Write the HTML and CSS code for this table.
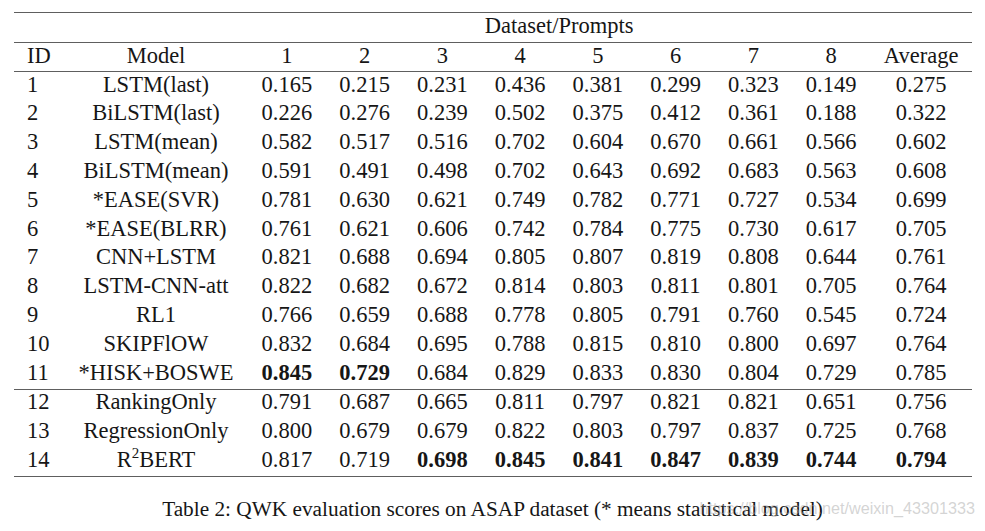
FILE: index.html
```html
<!DOCTYPE html>
<html>
<head>
<meta charset="utf-8">
<link rel="stylesheet" href="styles.css">
</head>
<body>
<div class="page">
  <table class="qwk">
    <colgroup>
      <col class="c-id"><col class="c-model">
      <col class="c-num"><col class="c-num"><col class="c-num"><col class="c-num">
      <col class="c-num"><col class="c-num"><col class="c-num"><col class="c-num">
      <col class="c-avg">
    </colgroup>
    <thead>
      <tr class="h1"><td></td><td></td><td colspan="8" class="ctr">Dataset/Prompts</td><td></td></tr>
      <tr class="h2 rule"><td class="id">ID</td><td>Model</td><td>1</td><td>2</td><td>3</td><td>4</td><td>5</td><td>6</td><td>7</td><td>8</td><td>Average</td></tr>
    </thead>
    <tbody>
      <tr class="rule first"><td class="id">1</td><td>LSTM(last)</td><td>0.165</td><td>0.215</td><td>0.231</td><td>0.436</td><td>0.381</td><td>0.299</td><td>0.323</td><td>0.149</td><td>0.275</td></tr>
      <tr class="r"><td class="id">2</td><td>BiLSTM(last)</td><td>0.226</td><td>0.276</td><td>0.239</td><td>0.502</td><td>0.375</td><td>0.412</td><td>0.361</td><td>0.188</td><td>0.322</td></tr>
      <tr class="r"><td class="id">3</td><td>LSTM(mean)</td><td>0.582</td><td>0.517</td><td>0.516</td><td>0.702</td><td>0.604</td><td>0.670</td><td>0.661</td><td>0.566</td><td>0.602</td></tr>
      <tr class="r"><td class="id">4</td><td>BiLSTM(mean)</td><td>0.591</td><td>0.491</td><td>0.498</td><td>0.702</td><td>0.643</td><td>0.692</td><td>0.683</td><td>0.563</td><td>0.608</td></tr>
      <tr class="r"><td class="id">5</td><td>*EASE(SVR)</td><td>0.781</td><td>0.630</td><td>0.621</td><td>0.749</td><td>0.782</td><td>0.771</td><td>0.727</td><td>0.534</td><td>0.699</td></tr>
      <tr class="r"><td class="id">6</td><td>*EASE(BLRR)</td><td>0.761</td><td>0.621</td><td>0.606</td><td>0.742</td><td>0.784</td><td>0.775</td><td>0.730</td><td>0.617</td><td>0.705</td></tr>
      <tr class="r"><td class="id">7</td><td>CNN+LSTM</td><td>0.821</td><td>0.688</td><td>0.694</td><td>0.805</td><td>0.807</td><td>0.819</td><td>0.808</td><td>0.644</td><td>0.761</td></tr>
      <tr class="r"><td class="id">8</td><td>LSTM-CNN-att</td><td>0.822</td><td>0.682</td><td>0.672</td><td>0.814</td><td>0.803</td><td>0.811</td><td>0.801</td><td>0.705</td><td>0.764</td></tr>
      <tr class="r"><td class="id">9</td><td>RL1</td><td>0.766</td><td>0.659</td><td>0.688</td><td>0.778</td><td>0.805</td><td>0.791</td><td>0.760</td><td>0.545</td><td>0.724</td></tr>
      <tr class="r"><td class="id">10</td><td>SKIPFlOW</td><td>0.832</td><td>0.684</td><td>0.695</td><td>0.788</td><td>0.815</td><td>0.810</td><td>0.800</td><td>0.697</td><td>0.764</td></tr>
      <tr class="r"><td class="id">11</td><td>*HISK+BOSWE</td><td class="b">0.845</td><td class="b">0.729</td><td>0.684</td><td>0.829</td><td>0.833</td><td>0.830</td><td>0.804</td><td>0.729</td><td>0.785</td></tr>
      <tr class="rule first"><td class="id">12</td><td>RankingOnly</td><td>0.791</td><td>0.687</td><td>0.665</td><td>0.811</td><td>0.797</td><td>0.821</td><td>0.821</td><td>0.651</td><td>0.756</td></tr>
      <tr class="r2"><td class="id">13</td><td>RegressionOnly</td><td>0.800</td><td>0.679</td><td>0.679</td><td>0.822</td><td>0.803</td><td>0.797</td><td>0.837</td><td>0.725</td><td>0.768</td></tr>
      <tr class="r2"><td class="id">14</td><td>R<sup class="sup">2</sup>BERT</td><td>0.817</td><td>0.719</td><td class="b">0.698</td><td class="b">0.845</td><td class="b">0.841</td><td class="b">0.847</td><td class="b">0.839</td><td class="b">0.744</td><td class="b">0.794</td></tr>
    </tbody>
  </table>
  <div class="caption">Table 2: QWK evaluation scores on ASAP dataset (* means statistical model)</div>
  <div class="watermark">https://blog.csdn.net/weixin_43301333</div>
</div>
</body>
</html>
```

FILE: styles.css
```css
html, body {
  margin: 0;
  padding: 0;
  background: #ffffff;
}
.page {
  position: relative;
  width: 985px;
  height: 531px;
  padding: 12px 13px 0 14px;
  box-sizing: border-box;
  font-family: "Liberation Serif", "Times New Roman", serif;
  color: #161616;
}
.qwk {
  width: 958px;
  table-layout: fixed;
  border-collapse: separate;
  border-spacing: 0;
  border-top: 1px solid #5e5e5e;
  border-bottom: 1px solid #5e5e5e;
  font-size: 22.5px;
  line-height: 24px;
}
.c-id { width: 50px; }
.c-model { width: 184px; }
.c-num { width: 77.75px; }
.c-avg { width: 102px; }
.qwk td {
  padding: 0 0 3px 0;
  text-align: center;
  vertical-align: middle;
  white-space: nowrap;
}
.qwk td.id {
  text-align: left;
  padding-left: 13px;
}
.qwk tr.rule td {
  border-top: 1px solid #5e5e5e;
}
.h1 { height: 29px; }
.h2 { height: 29px; }
.first { height: 29px; }
.r { height: 28.9px; }
.r2 { height: 29px; }
.b { font-weight: bold; }
.sup {
  font-size: 15px;
  line-height: 0;
  vertical-align: 9px;
}
.caption {
  margin-top: 19px;
  margin-left: -14px;
  margin-right: -13px;
  text-align: center;
  font-size: 21.3px;
  line-height: 26px;
}
.watermark {
  position: absolute;
  right: 10px;
  top: 498px;
  font-family: "Liberation Sans", Arial, sans-serif;
  font-size: 16.2px;
  line-height: 20px;
  color: rgba(170, 170, 170, 0.5);
}
```
